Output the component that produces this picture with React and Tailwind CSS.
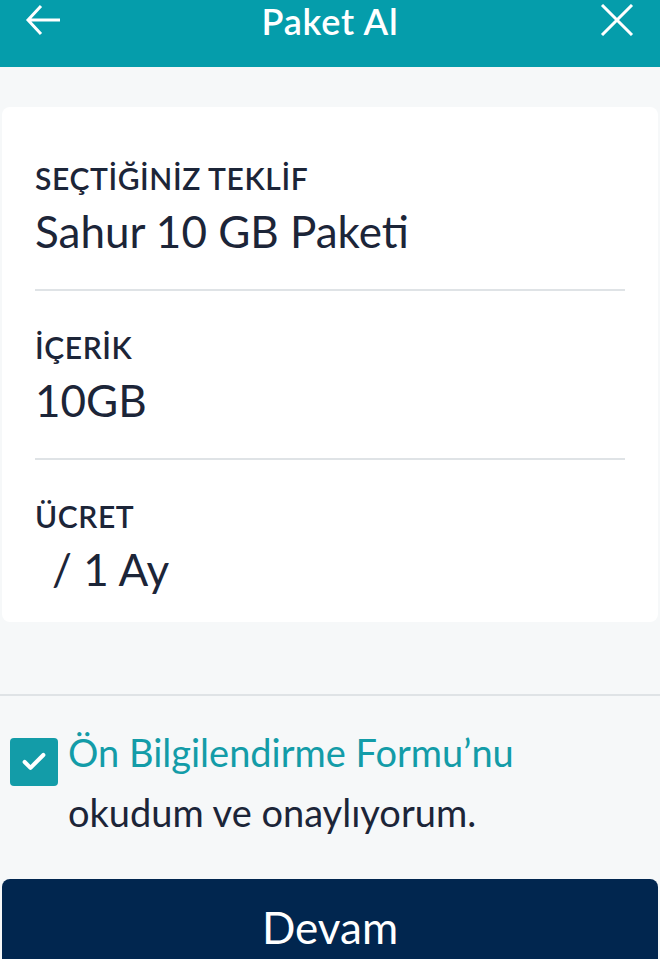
import { Check } from "lucide-react";

const rows = [
  { label: "SEÇTİĞİNİZ TEKLİF", value: "Sahur 10 GB Paketi" },
  { label: "İÇERİK", value: "10GB" },
  { label: "ÜCRET", value: "/ 1 Ay", indent: true },
];

export default function App() {
  return (
    <div className="flex h-[959px] w-[660px] flex-col overflow-hidden bg-[#f6f8f9] font-['Lato',sans-serif] text-[#1c2538]">
      <header className="flex h-[67px] shrink-0 items-start justify-between bg-[#059dab] px-[25px] text-white">
        <svg className="mt-[4px]" width="36" height="32" viewBox="0 0 36 32" fill="none" stroke="white" strokeWidth="3">
          <path d="M35 16H3M16 2L3 16l13 14" />
        </svg>
        <h1 className="text-[36px] leading-[42px] font-semibold tracking-[0.8px]">Paket Al</h1>
        <svg className="mt-[4px]" width="36" height="32" viewBox="0 0 36 32" fill="none" stroke="white" strokeWidth="3">
          <path d="M3 1l30 30M33 1L3 31" />
        </svg>
      </header>

      <main className="flex flex-1 flex-col pt-[40px]">
        <section className="mx-[2px] rounded-lg bg-white px-[33px] pt-[53px] pb-[27px]">
          {rows.map((row, i) => (
            <div
              key={row.label}
              className={i < rows.length - 1 ? "mb-[38px] border-b-2 border-[#dfe3e6] pb-[32px]" : ""}
            >
              <p className="text-[30px] leading-[36px] font-semibold tracking-[0.6px]">{row.label}</p>
              <p className={`mt-[9px] text-[44px] leading-[52px] ${row.indent ? "pl-[17px]" : ""}`}>
                {row.value}
              </p>
            </div>
          ))}
        </section>

        <div className="mt-[72px] border-t-2 border-[#dfe3e6]" />

        <label className="mt-[26px] flex items-start gap-[10px] pl-[10px]">
          <span className="mt-[16px] grid h-[48px] w-[48px] shrink-0 place-items-center rounded-[4px] bg-[#139ca8] text-white">
            <Check size={28} strokeWidth={3.5} />
          </span>
          <span className="text-[38px] leading-[60px]">
            <span className="text-[#139ca8]">Ön Bilgilendirme Formu’nu</span>
            <br />
            okudum ve onaylıyorum.
          </span>
        </label>

        <button className="mx-[2px] mt-auto h-[80px] rounded-t-lg bg-[#01264f] pt-[15px] text-[44px] leading-[50px] text-white">
          <span className="block">Devam</span>
        </button>
      </main>
    </div>
  );
}
